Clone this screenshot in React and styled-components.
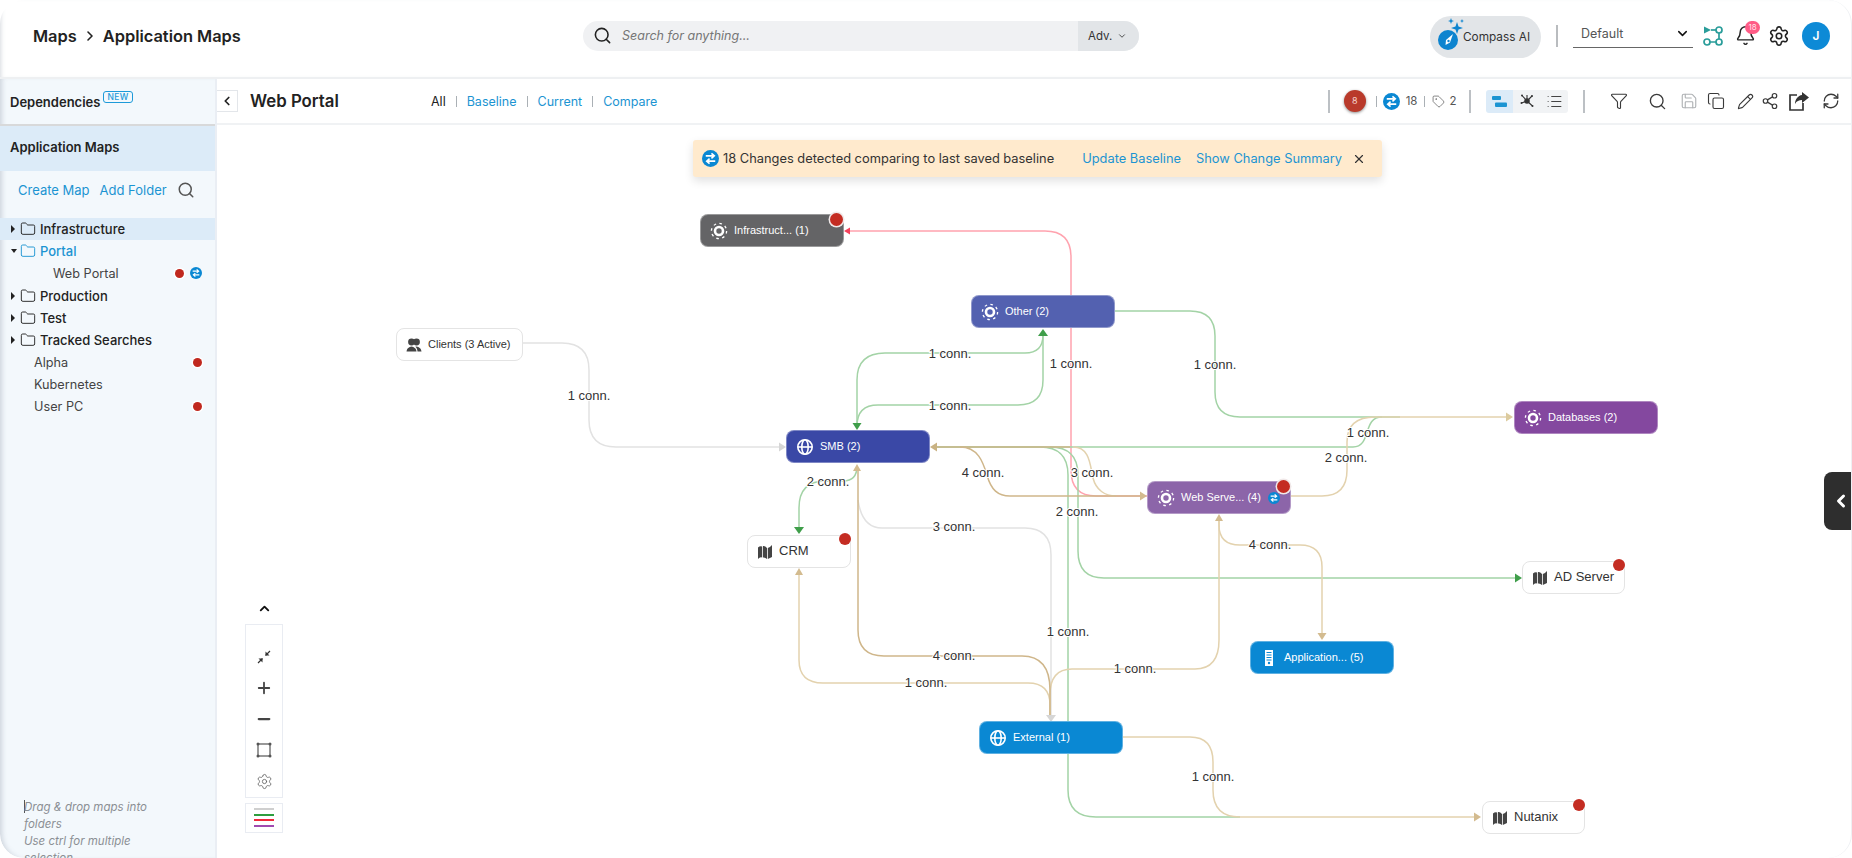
import React from "react";
import styled, { createGlobalStyle } from "styled-components";
import {
  Bell,
  ChevronDown,
  ChevronLeft,
  ChevronRight,
  ChevronUp,
  Copy,
  Filter,
  Folder,
  List,
  Minus,
  Pencil,
  Plus,
  RefreshCw,
  Save,
  Search,
  Settings,
  Share2,
  Tag,
  X,
} from "lucide-react";

const ORIGIN_X = 217;
const ORIGIN_Y = 125;

const GREEN = "#a3d3a6";
const TAN = "#e3d2ae";
const TAN_DARK = "#cfb68a";
const RED = "#ffa3af";
const GRAY = "#e2e2e2";

const edges = [
  { c: GRAY, d: "M523 343 H562 Q589 343 589 370 V420 Q589 447 616 447 H782" },
  { c: RED, d: "M1147 496 H1096 Q1071 496 1071 470 V257 Q1071 231 1045 231 H848" },
  { c: GREEN, d: "M857 426 V380 Q857 353 885 353 H1025 Q1043 353 1043 335" },
  { c: GREEN, d: "M857 426 Q857 405 878 405 H1018 Q1043 405 1043 380 V332" },
  { c: GREEN, d: "M1115 311 H1190 Q1215 311 1215 336 V392 Q1215 417 1240 417 H1400" },
  { c: GREEN, d: "M933 447 H1353 C1372 447 1362 417 1382 417" },
  { c: GREEN, d: "M933 447 H1040 Q1068 447 1068 475 V790 Q1068 817 1096 817 H1240" },
  { c: GREEN, d: "M1050 447 Q1078 447 1078 475 V551 Q1078 578 1104 578 H1516" },
  { c: GREEN, d: "M857 466 Q857 481 843 481 H825 Q799 481 799 508 V530" },
  { c: GRAY, d: "M858 500 Q862 528 882 528 H1025 Q1051 528 1051 555 V716" },
  { c: TAN, d: "M1291 496 H1322 Q1347 496 1347 470 V442 Q1347 417 1375 417 H1509" },
  { c: TAN, d: "M1050 716 V705 Q1050 683 1028 683 H823 Q799 683 799 660 V572" },
  { c: TAN, d: "M1050 716 V695 Q1050 669 1072 669 H1195 Q1219 669 1219 640 V518" },
  { c: TAN, d: "M1122 737 H1190 Q1213 737 1213 762 V790 Q1213 817 1240 817 H1477" },
  { c: TAN, d: "M1219 518 V525 Q1219 545 1240 545 H1300 Q1322 545 1322 567 V637" },
  { c: TAN, d: "M1073 447 C1090 447 1090 465 1093 478 C1096 490 1105 496 1116 496" },
  { c: TAN_DARK, d: "M934 447 H1070" },
  { c: TAN_DARK, d: "M960 447 C978 447 983 462 987 475 C991 490 998 496 1010 496 H1143" },
  { c: TAN_DARK, d: "M858 469 V630 Q858 656 884 656 H1022 Q1050 656 1050 690 V716" },
];

const arrows = [
  { c: "#d6d6d6", p: "786,447 779,442.5 779,451.5" },
  { c: "#f5425c", p: "844,231 850,227.5 850,234.5" },
  { c: "#3f9e4a", p: "857,430 852.5,423 861.5,423" },
  { c: "#3f9e4a", p: "1043,329 1038,336 1048,336" },
  { c: "#3f9e4a", p: "1522,578 1515,573.5 1515,582.5" },
  { c: "#3f9e4a", p: "799,534 794,527 804,527" },
  { c: "#d3bb8f", p: "857,464 853,471 861,471" },
  { c: "#c9b283", p: "930,447 937,442.5 937,451.5" },
  { c: "#d3bb8f", p: "1147,496 1140,491.5 1140,500.5" },
  { c: "#dccb9f", p: "1513,417 1506,412.5 1506,421.5" },
  { c: "#d3bb8f", p: "799,568 795,575 803,575" },
  { c: "#d3bb8f", p: "1219,514 1215,521 1223,521" },
  { c: "#d3bb8f", p: "1322,640 1317.5,633 1326.5,633" },
  { c: "#d3bb8f", p: "1481,817 1474,812.5 1474,821.5" },
  { c: "#d6d6d6", p: "1051,722 1046,715 1056,715" },
];

const edgeLabels = [
  [589, 400, "1 conn."],
  [950, 358, "1 conn."],
  [950, 410, "1 conn."],
  [1071, 368, "1 conn."],
  [1215, 369, "1 conn."],
  [828, 486, "2 conn."],
  [983, 477, "4 conn."],
  [1092, 477, "3 conn."],
  [1368, 437, "1 conn."],
  [1346, 462, "2 conn."],
  [1077, 516, "2 conn."],
  [954, 531, "3 conn."],
  [1270, 549, "4 conn."],
  [1068, 636, "1 conn."],
  [954, 660, "4 conn."],
  [1135, 673, "1 conn."],
  [926, 687, "1 conn."],
  [1213, 781, "1 conn."],
];

const nodes = [
  { x: 700, y: 214, label: "Infrastruct... (1)", bg: "#646466", icon: "gear", dot: true },
  { x: 971, y: 295, label: "Other (2)", bg: "#5361b0", icon: "gear" },
  { x: 396, y: 328, w: 127, label: "Clients (3 Active)", icon: "people" },
  { x: 1514, y: 401, label: "Databases (2)", bg: "#84489f", icon: "gear" },
  { x: 786, y: 430, label: "SMB (2)", bg: "#3a48a6", icon: "globe" },
  { x: 1147, y: 481, label: "Web Serve... (4)", bg: "#8c65a9", icon: "gear", dot: true, swap: true },
  { x: 747, y: 535, w: 104, label: "CRM", icon: "map", large: true, dot: true },
  { x: 1522, y: 561, w: 103, label: "AD Server", icon: "map", large: true, dot: true },
  { x: 1250, y: 641, label: "Application... (5)", bg: "#0a88d3", icon: "server" },
  { x: 979, y: 721, label: "External (1)", bg: "#0a88d3", icon: "globe" },
  { x: 1482, y: 801, w: 103, label: "Nutanix", icon: "map", large: true, dot: true },
];

const tree = [
  { label: "Infrastructure", folder: true, active: true },
  { label: "Portal", folder: true, open: true },
  { label: "Web Portal", depth: 2, dot: true, swap: true },
  { label: "Production", folder: true },
  { label: "Test", folder: true },
  { label: "Tracked Searches", folder: true },
  { label: "Alpha", depth: 1, dot: true },
  { label: "Kubernetes", depth: 1 },
  { label: "User PC", depth: 1, dot: true },
];

const GlobalStyle = createGlobalStyle`
  html, body { margin: 0; padding: 0; background: #fff; overflow: hidden; }
  #root { height: 100vh; }
  * { box-sizing: border-box; }
  body { font-family: Inter, "Liberation Sans", sans-serif; color: #222; }
`;

const Frame = styled.div`
  display: flex;
  flex-direction: column;
  height: 858px;
  background: #fff;
  border-radius: 24px;
  overflow: hidden;
  border-right: 1px solid #eef0f3;
`;

const TopBar = styled.header`
  height: 79px;
  flex: none;
  display: flex;
  align-items: center;
  padding: 0 21px 6px 33px;
  border-bottom: 2px solid #eef0f2;
  box-shadow: inset 4px 0 4px -3px rgba(120, 130, 150, 0.3);
`;

const Breadcrumb = styled.div`
  width: 550px;
  display: flex;
  align-items: center;
  gap: 4px;
  font-size: 16.4px;
  font-weight: 600;
  color: #222;
  svg { margin: 0 1px; }
`;

const SearchBar = styled.div`
  width: 556px;
  height: 30px;
  display: flex;
  align-items: center;
  background: #f0f1f3;
  border-radius: 15px;
  overflow: hidden;
  padding-left: 10px;
`;

const SearchText = styled.span`
  flex: 1;
  margin-left: 10px;
  font-size: 12.5px;
  font-style: italic;
  color: #767676;
`;

const AdvButton = styled.div`
  width: 61px;
  height: 100%;
  background: #e2e5e8;
  display: flex;
  align-items: center;
  gap: 5px;
  padding-left: 10px;
  font-size: 11.5px;
  color: #333;
`;

const TopRight = styled.div`
  margin-left: auto;
  display: flex;
  align-items: center;
`;

const CompassPill = styled.div`
  width: 111px;
  height: 42px;
  margin-top: 3px;
  display: flex;
  align-items: center;
  padding-left: 7px;
  border-radius: 21px;
  background: #e2e5e8;
  font-size: 11.8px;
  color: #333;
  svg { margin: -6px -4px 0 0; }
`;

const TopDivider = styled.span`
  width: 2px;
  height: 22px;
  margin: 0 15px;
  background: #b9bcbf;
`;

const ViewSelect = styled.div`
  width: 120px;
  height: 25px;
  margin-right: 4px;
  display: flex;
  align-items: center;
  justify-content: space-between;
  padding: 0 3px 3px 8px;
  border-bottom: 1px solid #666;
  font-size: 12.5px;
  color: #555;
`;

const IconSlot = styled.span`
  position: relative;
  display: flex;
  align-items: center;
  justify-content: center;
  width: ${(p) => p.$w || 32}px;
  margin-left: ${(p) => p.$m || 0}px;
  color: ${(p) => p.$color || "#333"};
`;

const CountBadge = styled.span`
  position: absolute;
  top: -4px;
  right: 1px;
  width: 15px;
  height: 13px;
  border-radius: 7px;
  background: #ff5c86;
  color: #ffe3ea;
  font-size: 8px;
  line-height: 13px;
  text-align: center;
`;

const Avatar = styled.span`
  width: 28px;
  height: 28px;
  margin-left: 6px;
  border-radius: 50%;
  background: #0d8ad6;
  color: #fff;
  font-size: 12px;
  font-weight: 600;
  text-align: center;
  line-height: 28px;
`;

const Body = styled.div`
  flex: 1;
  min-height: 0;
  display: flex;
`;

const Sidebar = styled.aside`
  width: 217px;
  flex: none;
  display: flex;
  flex-direction: column;
  background: #f3f8fc;
  border-right: 2px solid #eaeef4;
  border-bottom-left-radius: 24px;
  box-shadow: inset 5px 0 5px -3px rgba(120, 130, 150, 0.3);
  overflow: hidden;
`;

const SideHead = styled.div`
  height: ${(p) => p.$h}px;
  flex: none;
  display: flex;
  align-items: center;
  padding: 0 0 ${(p) => (p.$active ? 3 : 0)}px 10px;
  font-size: 13px;
  font-weight: 600;
  color: #222;
  background: ${(p) => (p.$active ? "#dcebf8" : "transparent")};
  border-bottom: ${(p) => (p.$active ? "none" : "2px solid #d8d9da")};
`;

const NewTag = styled.span`
  margin: -9px 0 0 3px;
  padding: 0 3px;
  height: 12px;
  line-height: 10px;
  border: 1px solid #1d9ad9;
  border-radius: 3px;
  font-size: 8.5px;
  font-weight: 500;
  letter-spacing: 0.4px;
  color: #1d9ad9;
`;

const MapActions = styled.div`
  height: 47px;
  flex: none;
  display: flex;
  align-items: center;
  gap: 10px;
  padding: 0 0 10px 18px;
  color: #555;
`;

const BlueLink = styled.a`
  font-size: ${(p) => p.$size || 12.5}px;
  color: #1c94d2;
`;

const Tree = styled.div`
  flex: none;
`;

const TreeRow = styled.div`
  height: 22.2px;
  display: flex;
  align-items: center;
  padding-left: ${(p) => (p.$depth === 2 ? 53 : p.$depth === 1 ? 34 : 11)}px;
  padding-right: 13.5px;
  background: ${(p) => (p.$active ? "#dcebf8" : "transparent")};
  font-size: ${(p) => (p.$folder ? 13 : 12.7)}px;
  font-weight: ${(p) => (p.$folder ? 500 : 400)};
  color: ${(p) => (p.$open ? "#1c94d2" : p.$folder ? "#222" : "#444")};
`;

const Caret = styled.span`
  width: 0;
  height: 0;
  flex: none;
  margin-right: ${(p) => (p.$open ? 3 : 5)}px;
  border-style: solid;
  ${(p) =>
    p.$open
      ? "border-width: 4px 3.5px 0 3.5px; border-color: #222 transparent transparent transparent;"
      : "border-width: 4px 0 4px 4px; border-color: transparent transparent transparent #222;"}
`;

const RowLabel = styled.span`
  margin-left: ${(p) => (p.$folder ? 4 : 0)}px;
  flex: 1;
`;

const StatusDot = styled.span`
  width: 9px;
  height: 9px;
  flex: none;
  border-radius: 50%;
  background: #c0281e;
  box-shadow: 0 0 0 1.5px #fff;
`;

const DragNote = styled.div`
  width: 150px;
  margin: auto 0 -9px 24px;
  font-size: 11.5px;
  font-style: italic;
  line-height: 17px;
  color: #8b8f94;
`;

const TextCaret = styled.span`
  display: inline-block;
  width: 1px;
  height: 13px;
  margin-right: -1px;
  vertical-align: -2px;
  background: #555;
`;

const Main = styled.main`
  flex: 1;
  min-width: 0;
  display: flex;
  flex-direction: column;
`;

const Toolbar = styled.div`
  height: 46px;
  flex: none;
  display: flex;
  align-items: center;
  border-bottom: 2px solid #f0f2f4;
`;

const BackButton = styled.span`
  width: 21px;
  height: 22px;
  margin-right: 12px;
  display: flex;
  align-items: center;
  justify-content: center;
  border: 1px solid #e3e6ea;
  border-left: none;
`;

const MapTitle = styled.h1`
  width: 181px;
  margin: 0;
  font-size: 16.8px;
  font-weight: 600;
  color: #222;
`;

const Tabs = styled.nav`
  display: flex;
  align-items: center;
  gap: 10px;
  font-size: 12.5px;
`;

const Sep = styled.span`
  width: 1px;
  height: ${(p) => p.$h || 11}px;
  background: #aab0b5;
  margin: ${(p) => (p.$m !== undefined ? `0 ${p.$m}px` : "0")};
`;

const ToolbarRight = styled.div`
  margin-left: auto;
  padding-right: 4px;
  display: flex;
  align-items: center;
  color: #444;
  font-size: 11.5px;
`;

const AlertBadge = styled.span`
  width: 22px;
  height: 22px;
  margin: 0 10px 0 14px;
  border-radius: 50%;
  background: #b93a2b;
  color: #f6d4cf;
  text-align: center;
  font-size: 9px;
  line-height: 22px;
  box-shadow: 0 1px 3px rgba(0, 0, 0, 0.45);
`;

const Count = styled.span`
  margin-left: ${(p) => p.$m || 3}px;
  color: #555;
`;

const WideRule = styled.span`
  width: 2px;
  height: 23px;
  background: #bcc0c4;
  margin: ${(p) => p.$m};
`;

const ViewGroup = styled.div`
  display: flex;
  height: 23px;
  border-radius: 3px;
  overflow: hidden;
`;

const ViewButton = styled.span`
  width: 27.5px;
  display: flex;
  align-items: center;
  justify-content: center;
  background: ${(p) => (p.$on ? "#dcebf8" : "#f1f3f5")};
  color: #444;
`;

const ToolIcon = styled.span`
  width: ${(p) => p.$w}px;
  display: flex;
  justify-content: center;
  color: ${(p) => p.$color || "#3a3a3a"};
`;

const Canvas = styled.div`
  position: relative;
  flex: 1;
  min-height: 0;
  overflow: hidden;
`;

const Graph = styled.svg`
  position: absolute;
  left: 0;
  top: 0;
`;

const EdgeLabel = styled.text`
  font-family: "Liberation Sans", Arial, sans-serif;
  font-size: 13px;
  fill: #333;
  text-anchor: middle;
  paint-order: stroke;
  stroke: #fff;
  stroke-width: 2px;
`;

const NodeBox = styled.div`
  position: absolute;
  left: ${(p) => p.$x - ORIGIN_X}px;
  top: ${(p) => p.$y - ORIGIN_Y}px;
  width: ${(p) => p.$w || 144}px;
  height: 33px;
  display: flex;
  align-items: center;
  padding-left: 9px;
  border-radius: 8px;
  background: ${(p) => p.$bg || "#fff"};
  border: 1px solid ${(p) => (p.$bg ? "rgba(255,255,255,0.35)" : "#e4e4e4")};
  color: ${(p) => (p.$bg ? "#fff" : "#333")};
  font-family: "Liberation Sans", Arial, sans-serif;
  font-size: ${(p) => (p.$large ? 13 : 11)}px;
  white-space: nowrap;
`;

const NodeText = styled.span`
  margin: -2px 0 0 6px;
`;

const NodeDot = styled.span`
  position: absolute;
  right: ${(p) => (p.$bg ? 0.5 : -0.5)}px;
  top: ${(p) => (p.$bg ? -2.5 : -3)}px;
  width: ${(p) => (p.$bg ? 13 : 12)}px;
  height: ${(p) => (p.$bg ? 13 : 12)}px;
  border-radius: 50%;
  background: #c42c22;
  box-shadow: ${(p) => (p.$bg ? "0 0 0 1.5px #f0e8e8" : "none")};
`;

const NodeSwap = styled.span`
  position: absolute;
  right: 10px;
  top: 10px;
  display: flex;
`;

const Banner = styled.div`
  position: absolute;
  left: ${693 - ORIGIN_X}px;
  top: ${140 - ORIGIN_Y}px;
  width: 689px;
  height: 37px;
  display: flex;
  align-items: center;
  padding: 0 16px 0 9px;
  border-radius: 3px;
  background: #ffeacd;
  box-shadow: 0 4px 10px rgba(0, 0, 0, 0.12);
  font-size: 12.85px;
  color: #333;
`;

const BannerText = styled.span`
  margin-left: 4px;
  flex: 1;
`;

const BannerLinks = styled.span`
  display: flex;
  gap: 15px;
  margin-right: 10px;
`;

const MapTools = styled.div`
  position: absolute;
  left: ${245 - ORIGIN_X}px;
  top: ${600 - ORIGIN_Y}px;
  width: 38px;
  display: flex;
  flex-direction: column;
  align-items: center;
`;

const CollapseUp = styled.span`
  height: 16px;
  margin-bottom: 8px;
  display: flex;
  align-items: center;
  color: #111;
`;

const ToolBox = styled.div`
  width: 38px;
  height: 174px;
  padding-top: 22px;
  display: flex;
  flex-direction: column;
  align-items: center;
  gap: 11px;
  border: 1px solid #e9ecf2;
  color: #444;
`;

const ToolSlot = styled.span`
  height: 20px;
  display: flex;
  align-items: center;
`;

const LegendBox = styled.div`
  width: 38px;
  height: 30px;
  margin-top: 5px;
  padding-top: 4px;
  display: flex;
  flex-direction: column;
  align-items: center;
  gap: 3.7px;
  border: 1px solid #e9ecf2;
`;

const LegendLine = styled.span`
  width: 20px;
  height: 2px;
  background: ${(p) => p.$c};
`;

const DrawerHandle = styled.div`
  position: absolute;
  right: 0;
  top: ${472 - ORIGIN_Y}px;
  width: 27px;
  height: 58px;
  display: flex;
  align-items: center;
  justify-content: flex-end;
  border-radius: 8px 0 0 8px;
  background: #2e2e2e;
  color: #fff;
`;

function SwapIcon({ size = 17, bg = "#0a88d3" }) {
  return (
    <svg width={size} height={size} viewBox="0 0 18 18">
      <circle cx="9" cy="9" r="9" fill={bg} />
      <path d="M4 6.6 H11.5 M10 4 L13 6.6 L10 9.2" transform="translate(0 -0.4)" fill="none" stroke="#fff" strokeWidth="1.7" />
      <path d="M14 11.4 H6.5 M8 8.8 L5 11.4 L8 14" transform="translate(0 0.4)" fill="none" stroke="#fff" strokeWidth="1.7" />
    </svg>
  );
}

function NodeGear() {
  return (
    <svg width="18" height="18" viewBox="0 0 18 18" fill="none" stroke="#fff">
      <circle cx="9" cy="9" r="4" strokeWidth="2.6" />
      <circle cx="9" cy="9" r="7.6" strokeWidth="1.3" strokeDasharray="2.6 3.4" />
    </svg>
  );
}

function NodeGlobe() {
  return (
    <svg width="18" height="18" viewBox="0 0 18 18" fill="none" stroke="#fff" strokeWidth="1.6">
      <circle cx="9" cy="9" r="7.2" />
      <ellipse cx="9" cy="9" rx="3.2" ry="7.2" />
      <path d="M2 9 H16" />
    </svg>
  );
}

function NodeServer() {
  return (
    <svg width="18" height="18" viewBox="0 0 18 18">
      <rect x="5" y="1" width="8" height="16" fill="#fff" />
      <path d="M6.5 3.5 H11.5 M6.5 6 H11.5 M6.5 8.5 H11.5 M6.5 11 H11.5" stroke="#0a88d3" strokeWidth="1" />
      <circle cx="9" cy="14" r="1.2" fill="#0a88d3" />
    </svg>
  );
}

function NodeMap() {
  return (
    <svg width="16" height="16" viewBox="0 0 16 16" fill="#444">
      <path d="M1 3.5 Q3 1.5 5.2 2.5 V13.5 Q3 12.5 1 15 Z" />
      <path d="M6 2 Q8 1.5 10 4 V15 Q8 13 6 13.5 Z" />
      <path d="M10.8 4 Q13 3.5 15 1 V13 Q13 14 10.8 15 Z" />
    </svg>
  );
}

function NodePeople() {
  return (
    <svg width="16" height="16" viewBox="0 0 16 16" fill="#444">
      <circle cx="5.5" cy="5" r="3.4" />
      <circle cx="10.5" cy="5" r="3.4" />
      <path d="M0.5 14.5 C1 11 3 10 5.5 9.5 C8 10 10 11 10.5 14.5 Z" />
      <path d="M11.5 14.5 C11.3 12 10.5 10.6 9.3 9.8 L10.5 9.5 C13 10 15 11 15.5 14.5 Z" />
    </svg>
  );
}

const nodeIcons = {
  gear: NodeGear,
  globe: NodeGlobe,
  server: NodeServer,
  map: NodeMap,
  people: NodePeople,
};

function CompassIcon() {
  return (
    <svg width="30" height="34" viewBox="0 0 30 34">
      <circle cx="11" cy="23" r="10" fill="#0d84cf" />
      <path d="M16 17 L13 25.5 L8.5 28 L9 23 Z" fill="#fff" />
      <circle cx="11.5" cy="24" r="1.2" fill="#0d84cf" />
      <path d="M20 5 L21.5 9.5 L26 11 L21.5 12.5 L20 17 L18.5 12.5 L14 11 L18.5 9.5 Z" fill="#0d84cf" />
      <path d="M14 1 L14.8 3.2 L17 4 L14.8 4.8 L14 7 L13.2 4.8 L11 4 L13.2 3.2 Z" fill="#0d84cf" />
      <path d="M25 2 L25.6 3.4 L27 4 L25.6 4.6 L25 6 L24.4 4.6 L23 4 L24.4 3.4 Z" fill="#0d84cf" />
    </svg>
  );
}

function FlowIcon() {
  return (
    <svg width="22" height="22" viewBox="0 0 22 22" fill="none" stroke="#2a9d9a" strokeWidth="1.7">
      <path d="M2 1.5 L9 5 L2 8.5 Z" fill="#2a9d9a" stroke="none" />
      <path d="M9 5 H14" />
      <circle cx="17" cy="5" r="3" />
      <circle cx="5" cy="17" r="3" />
      <circle cx="17" cy="17" r="3" />
      <path d="M8 17 H14 M17 8 V14" />
    </svg>
  );
}

function LanesIcon() {
  return (
    <svg width="15" height="13" viewBox="0 0 15 13" fill="#1c94d2">
      <rect x="0" y="1" width="9" height="4" rx="1" />
      <rect x="3" y="7.5" width="12" height="4.5" rx="1" />
    </svg>
  );
}

function StarNetIcon() {
  return (
    <svg width="16" height="16" viewBox="0 0 16 16" fill="#333" stroke="#333" strokeWidth="1.1">
      <path d="M8 8 L3 2.5 M8 8 L13 3 M8 8 L2.5 10 M8 8 L13.5 13 M8 8 L8 2" />
      <circle cx="8" cy="8" r="2.8" stroke="none" />
      <circle cx="3" cy="2.5" r="1" stroke="none" />
      <circle cx="13" cy="3" r="1" stroke="none" />
      <circle cx="2.5" cy="10" r="1" stroke="none" />
      <circle cx="13.5" cy="13" r="1" stroke="none" />
    </svg>
  );
}

function ExportIcon() {
  return (
    <svg width="22" height="20" viewBox="0 0 22 20" fill="none" stroke="#333" strokeWidth="1.7">
      <path d="M9 4 H2 V19 H15 V12" />
      <path d="M14 1 L21 6.5 L14 12 V9 C11 9 8.5 10 7 13 C7 8.5 10 4.5 14 4 Z" fill="#333" stroke="none" />
    </svg>
  );
}

function FitIcon() {
  return (
    <svg width="16" height="16" viewBox="0 0 16 16" fill="none" stroke="#555" strokeWidth="1.2">
      <rect x="2" y="2" width="12" height="12" />
      <g fill="#555" stroke="none">
        <circle cx="2" cy="2" r="1.5" />
        <circle cx="14" cy="2" r="1.5" />
        <circle cx="2" cy="14" r="1.5" />
        <circle cx="14" cy="14" r="1.5" />
      </g>
    </svg>
  );
}

function ShrinkIcon() {
  return (
    <svg width="14" height="14" viewBox="0 0 14 14" fill="none" stroke="#333" strokeWidth="1.2">
      <path d="M1 13 L5.5 8.5 M13 1 L8.5 5.5" />
      <path d="M1.5 8.5 H5.5 V12.5 Z M12.5 5.5 H8.5 V1.5 Z" fill="#333" stroke="none" />
    </svg>
  );
}

function GraphNode({ node }) {
  const Icon = nodeIcons[node.icon];
  return (
    <NodeBox $x={node.x} $y={node.y} $w={node.w} $bg={node.bg} $large={node.large}>
      <Icon />
      <NodeText>{node.label}</NodeText>
      {node.swap && (
        <NodeSwap>
          <SwapIcon size={12} />
        </NodeSwap>
      )}
      {node.dot && <NodeDot $bg={node.bg} />}
    </NodeBox>
  );
}

export default function App() {
  return (
    <>
      <GlobalStyle />
      <Frame>
        <TopBar>
          <Breadcrumb>
            Maps <ChevronRight size={16} strokeWidth={2.4} /> Application Maps
          </Breadcrumb>
          <SearchBar>
            <Search size={19} color="#222" />
            <SearchText>Search for anything...</SearchText>
            <AdvButton>
              Adv. <ChevronDown size={10} />
            </AdvButton>
          </SearchBar>
          <TopRight>
            <CompassPill>
              <CompassIcon />
              Compass AI
            </CompassPill>
            <TopDivider />
            <ViewSelect>
              Default <ChevronDown size={15} color="#111" strokeWidth={2.4} />
            </ViewSelect>
            <IconSlot $w={32}>
              <FlowIcon />
            </IconSlot>
            <IconSlot $w={32}>
              <Bell size={21} strokeWidth={1.7} color="#222" />
              <CountBadge>18</CountBadge>
            </IconSlot>
            <IconSlot $w={34} $m={1}>
              <Settings size={22} strokeWidth={1.7} color="#222" />
            </IconSlot>
            <Avatar>J</Avatar>
          </TopRight>
        </TopBar>
        <Body>
          <Sidebar>
            <SideHead $h={47}>
              Dependencies <NewTag>NEW</NewTag>
            </SideHead>
            <SideHead $h={45} $active>
              Application Maps
            </SideHead>
            <MapActions>
              <BlueLink $size={13}>Create Map</BlueLink>
              <BlueLink $size={13}>Add Folder</BlueLink>
              <Search size={18} />
            </MapActions>
            <Tree>
              {tree.map((row) => (
                <TreeRow key={row.label} $depth={row.depth} $folder={row.folder} $active={row.active} $open={row.open}>
                  {row.folder && <Caret $open={row.open} />}
                  {row.folder && <Folder size={16} strokeWidth={1.4} color={row.open ? "#1c94d2" : "#222"} />}
                  <RowLabel $folder={row.folder}>{row.label}</RowLabel>
                  {row.dot && <StatusDot />}
                  {row.swap && (
                    <IconSlot $w={12} $m={6}>
                      <SwapIcon size={12} />
                    </IconSlot>
                  )}
                </TreeRow>
              ))}
            </Tree>
            <DragNote>
              <TextCaret />
              Drag &amp; drop maps into folders
              <br />
              Use ctrl for multiple selection
            </DragNote>
          </Sidebar>
          <Main>
            <Toolbar>
              <BackButton>
                <ChevronLeft size={14} strokeWidth={3} color="#222" />
              </BackButton>
              <MapTitle>Web Portal</MapTitle>
              <Tabs>
                <span>All</span>
                <Sep />
                <BlueLink>Baseline</BlueLink>
                <Sep />
                <BlueLink>Current</BlueLink>
                <Sep />
                <BlueLink>Compare</BlueLink>
              </Tabs>
              <ToolbarRight>
                <WideRule $m="0" />
                <AlertBadge>8</AlertBadge>
                <Sep $m={0} />
                <IconSlot $w={30}>
                  <SwapIcon />
                </IconSlot>
                <Count $m={-1}>18</Count>
                <Sep $m={7} />
                <Tag size={13} strokeWidth={1.3} color="#555" />
                <Count $m={4}>2</Count>
                <WideRule $m="0 15px 0 12px" />
                <ViewGroup>
                  <ViewButton $on>
                    <LanesIcon />
                  </ViewButton>
                  <ViewButton>
                    <StarNetIcon />
                  </ViewButton>
                  <ViewButton>
                    <List size={17} strokeWidth={1.6} />
                  </ViewButton>
                </ViewGroup>
                <WideRule $m="0 18px 0 15px" />
                <ToolIcon $w={32}>
                  <Filter size={18} strokeWidth={1.5} />
                </ToolIcon>
                <ToolIcon $w={44}>
                  <Search size={19} strokeWidth={1.7} />
                </ToolIcon>
                <ToolIcon $w={20} $color="#aeb1b4">
                  <Save size={18} strokeWidth={1.5} />
                </ToolIcon>
                <ToolIcon $w={34}>
                  <Copy size={18} strokeWidth={1.5} />
                </ToolIcon>
                <ToolIcon $w={24}>
                  <Pencil size={17} strokeWidth={1.6} />
                </ToolIcon>
                <ToolIcon $w={26}>
                  <Share2 size={18} strokeWidth={1.6} />
                </ToolIcon>
                <ToolIcon $w={32}>
                  <ExportIcon />
                </ToolIcon>
                <ToolIcon $w={32}>
                  <RefreshCw size={18} strokeWidth={1.7} />
                </ToolIcon>
              </ToolbarRight>
            </Toolbar>
            <Canvas>
              <Graph width="1635" height="733" viewBox={`${ORIGIN_X} ${ORIGIN_Y} 1635 733`}>
                {edges.map((edge) => (
                  <path key={edge.d} d={edge.d} fill="none" stroke={edge.c} strokeWidth="1.5" />
                ))}
                {arrows.map((arrow) => (
                  <polygon key={arrow.p} points={arrow.p} fill={arrow.c} />
                ))}
                {edgeLabels.map(([x, y, text]) => (
                  <EdgeLabel key={`${x}-${y}`} x={x} y={y}>
                    {text}
                  </EdgeLabel>
                ))}
              </Graph>
              {nodes.map((node) => (
                <GraphNode key={node.label} node={node} />
              ))}
              <Banner>
                <SwapIcon />
                <BannerText>18 Changes detected comparing to last saved baseline</BannerText>
                <BannerLinks>
                  <BlueLink $size={12.85}>Update Baseline</BlueLink>
                  <BlueLink $size={12.85}>Show Change Summary</BlueLink>
                </BannerLinks>
                <X size={14} color="#333" />
              </Banner>
              <MapTools>
                <CollapseUp>
                  <ChevronUp size={15} strokeWidth={3} />
                </CollapseUp>
                <ToolBox>
                  <ToolSlot>
                    <ShrinkIcon />
                  </ToolSlot>
                  <ToolSlot>
                    <Plus size={18} strokeWidth={2.4} />
                  </ToolSlot>
                  <ToolSlot>
                    <Minus size={18} strokeWidth={3} />
                  </ToolSlot>
                  <ToolSlot>
                    <FitIcon />
                  </ToolSlot>
                  <ToolSlot>
                    <Settings size={17} strokeWidth={1.2} color="#666" />
                  </ToolSlot>
                </ToolBox>
                <LegendBox>
                  <LegendLine $c="#cfcfcf" />
                  <LegendLine $c="#2e9e3e" />
                  <LegendLine $c="#f0283c" />
                  <LegendLine $c="#a04ab0" />
                </LegendBox>
              </MapTools>
              <DrawerHandle>
                <ChevronLeft size={20} strokeWidth={3.6} />
              </DrawerHandle>
            </Canvas>
          </Main>
        </Body>
      </Frame>
    </>
  );
}
